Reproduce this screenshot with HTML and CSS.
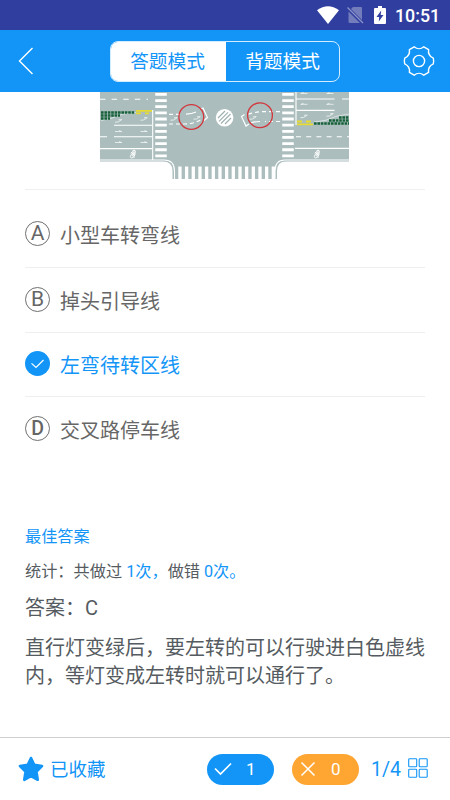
FILE: index.html
```html
<!DOCTYPE html>
<html lang="zh-CN">
<head>
<meta charset="utf-8">
<title>答题模式</title>
<link rel="stylesheet" href="styles.css">
</head>
<body>
<div class="status">
  <svg class="wifi" width="22" height="18" viewBox="0 0 22 18"><path d="M0 4.2Q11-3.6 22 4.2L11 18Z" fill="#fff"/></svg>
  <svg class="sim" width="17" height="18" viewBox="0 0 17 18"><path d="M6 1H14Q15 1 15 2V14L4 3ZM1.5 5.5L13 17H3Q1.5 17 1.5 15.5Z" fill="#747dbc"/><path d="M.5 1.5L16 17" stroke="#8c93c9" stroke-width="1.3"/></svg>
  <svg class="battery" width="12" height="18" viewBox="0 0 12 18"><path d="M4 0H8V2H11Q12 2 12 3V17Q12 18 11 18H1Q0 18 0 17V3Q0 2 1 2H4Z" fill="#fff"/><path d="M7.2 4.5L2.5 11H5.2L4.8 15.5L9.5 9H6.7Z" fill="#303f9f"/></svg>
  <span class="clock">10:51</span>
</div>
<header class="header">
  <svg class="back" width="16" height="28" viewBox="0 0 16 28"><path d="M14.5 1L1.5 14L14.5 27" fill="none" stroke="#fff" stroke-width="1.4"/></svg>
  <div class="tabs"><span class="tab active">答题模式</span><span class="tab">背题模式</span></div>
  <svg class="gear" width="32" height="32" viewBox="0 0 32 32" fill="none" stroke="#fff" stroke-width="1.4" stroke-linejoin="round"><path d="M11.2 1.8C14 4.2 18 4.2 20.8 1.8L25.6 4.6C25 8.6 26.6 11.5 30.3 13.2Q31 16 30.3 18.8C26.6 20.5 25 23.4 25.6 27.4L20.8 30.2C18 27.8 14 27.8 11.2 30.2L6.4 27.4C7 23.4 5.4 20.5 1.7 18.8Q1 16 1.7 13.2C5.4 11.5 7 8.6 6.4 4.6Z"/><circle cx="16" cy="16" r="5.6"/></svg>
</header>
<main class="content">
  <svg class="road" width="249" height="87" viewBox="100 92 249 87">
    <defs>
      <g id="arrow" fill="none" stroke="#f2f6f6" stroke-width=".8"><path d="M-3.5 0H3M.5-1L3.5 .3"/></g>
      <g id="turn" fill="none" stroke="#f2f6f6" stroke-width=".8"><path d="M-3.5 1.2L-.5 1L3-1.2M0-1.2L3.5-1.4"/></g>
      <g id="bike" fill="none" stroke="#fff" stroke-width=".9"><circle cx="-1.2" cy="2.5" r="1.5"/><circle cx="1" cy="-2.3" r="1.5"/><path d="M-2-2L2 2M1-4V4M-2.5 0H3"/></g>
    </defs>
    <path d="M100 92H349V161.5H286Q277 161.5 277 171V179H172.5V171Q172.5 161.5 163 161.5H100Z" fill="#abbdbd"/>
    <g stroke="#fff" fill="none" stroke-width="1.1">
      <path d="M100 99.3H148" stroke-dasharray="5.5 6.1"/>
      <path d="M114 125.2H152M100 136.8H107M114 136.8H152M100 148.6H152"/>
      <path d="M100 160H164Q174.5 160 174.5 171V179M152.7 110V160"/>
      <path d="M296 92V125M296 99H334.5M342 99H349M296 110.4H334.5M295 148.4H349"/>
      <path d="M296 136.7H349" stroke-dasharray="5 5.2"/>
      <path d="M349 160H285Q275 160 275 171V179"/>
    </g>
    <g fill="none" stroke="#edf1f0" stroke-width=".7"><path d="M101 120.5Q112 119 123 114L136 112.5"/><path d="M349 114Q337 115 325 120.5L314 122"/></g>
    <g fill="none" stroke="#17613a" stroke-width="2.5" stroke-dasharray="2.6 .8">
      <path d="M101 112.4H135M101 115.4H120M101 118.4H110"/>
      <path d="M314 123.4H349M329 120.4H349M339 117.4H349"/>
    </g>
    <path d="M136 110.9H152M136 113.3H141M145 113.3H149M297 124.3H313M297 121.5H302M306 121.5H311" stroke="#e6db32" stroke-width="1.8"/>
    <path d="M161 93V158.3M288 93V158.3" stroke="#fff" stroke-width="11.5" stroke-dasharray="2.8 3.35"/>
    <path d="M178.3 172.8H275" stroke="#fff" stroke-width="12.4" stroke-dasharray="3.3 3.37"/>
    <g fill="none" stroke="#fff" stroke-width="1.2">
      <path d="M169 114.4H181M169 124H185Q194 124 202 119" stroke-dasharray="4 3"/>
      <path d="M186 114.2Q192 114 196 112M201 109L203 108L207.5 117.5L204 120.5"/>
      <path d="M280 111.6H263Q254 112 246 115" stroke-dasharray="4 3"/>
      <path d="M280 121.5H265" stroke-dasharray="4 3"/>
      <path d="M244.5 114.5L241.5 116.5L246 126L249 124M251 123Q254 121.5 260 121.5"/>
    </g>
    <circle cx="224.6" cy="117.7" r="8.8" fill="#fff"/>
    <path d="M218 118L225 111M219 121.3L228 112.3M221 123.5L230.5 114M225 124L231 118" stroke="#a0b1b1" stroke-width="1.2"/>
    <g fill="none" stroke="#d2353b" stroke-width="1.3"><circle cx="191.3" cy="117" r="12.4"/><circle cx="260" cy="115.3" r="12.4"/></g>
    <use href="#turn" x="118.5" y="121"/><use href="#turn" x="144" y="119"/>
    <use href="#arrow" x="118.5" y="131.5"/><use href="#arrow" x="144" y="131.5"/>
    <use href="#arrow" x="118.5" y="142.5"/><use href="#arrow" x="144" y="142.5"/>
    <use href="#turn" x="174" y="119"/><use href="#turn" x="197" y="118"/><use href="#turn" x="253" y="118"/>
    <g transform="translate(608 0) scale(-1 1)">
      <use href="#arrow" x="304" y="93.5"/><use href="#arrow" x="278" y="93.5"/>
      <use href="#arrow" x="304" y="104.3"/><use href="#arrow" x="278" y="104.3"/>
    </g>
    <use href="#turn" x="304" y="116.5"/><use href="#turn" x="330" y="115"/>
    <use href="#bike" x="133" y="154"/><use href="#bike" x="317" y="154"/>
  </svg>
  <div class="options">
    <div class="option first"><span class="letter">A</span><span>小型车转弯线</span></div>
    <div class="option"><span class="letter">B</span><span>掉头引导线</span></div>
    <div class="option chosen"><svg class="check" width="25" height="25" viewBox="0 0 25 25"><circle cx="12.5" cy="12.5" r="12.5" fill="#1295f7"/><path d="M6.5 12.4L11 16.5L18.5 9" fill="none" stroke="#fff" stroke-width="1.2"/></svg><span>左弯待转区线</span></div>
    <div class="option"><span class="letter bold">D</span><span>交叉路停车线</span></div>
  </div>
  <section class="answer">
    <h2 class="best">最佳答案</h2>
    <p class="stats">统计：共做过 <span class="blue">1次，</span>做错 <span class="blue">0次。</span></p>
    <p class="key">答案：C</p>
    <p class="explain">直行灯变绿后，要左转的可以行驶进白色虚线内，等灯变成左转时就可以通行了。</p>
  </section>
</main>
<footer class="footer">
  <svg class="star" width="26" height="26" viewBox="0 0 26 26"><path d="M13 2L16.2 8.7L24 10L18.5 15.7L19.7 23.8L13 20.2L6.3 23.8L7.5 15.7L2 10L9.8 8.7Z" fill="#1295f7" stroke="#1295f7" stroke-width="2.6" stroke-linejoin="round"/></svg>
  <span class="saved">已收藏</span>
  <span class="pill right"><svg width="18" height="16" viewBox="0 0 18 16"><path d="M1 7.5L6.5 13L17 2.5" fill="none" stroke="#fff" stroke-width="1.7"/></svg><b>1</b></span>
  <span class="pill wrong"><svg width="16" height="16" viewBox="0 0 16 16"><path d="M1.5 1.5L14.5 14.5M14.5 1.5L1.5 14.5" stroke="#fff" stroke-width="1.5"/></svg><b>0</b></span>
  <span class="page">1/4</span>
  <svg class="grid" width="20" height="20" viewBox="0 0 20 20" fill="none" stroke="#1295f7" stroke-width="1.1"><rect x=".7" y=".7" width="8" height="8" rx=".8"/><rect x="11.2" y=".7" width="8" height="8" rx=".8"/><rect x=".7" y="11.2" width="8" height="8" rx=".8"/><rect x="11.2" y="11.2" width="8" height="8" rx=".8"/></svg>
</footer>
</body>
</html>
```
FILE: styles.css
```css
* { box-sizing: border-box; }
body {
  margin: 0;
  width: 450px;
  height: 800px;
  display: flex;
  flex-direction: column;
  overflow: hidden;
  background: #fff;
  color: #555b60;
  font-family: Roboto, "Noto Sans CJK SC", sans-serif;
}
svg { display: block; flex: none; }
h2, p { margin: 0; font-weight: 400; }

.status {
  height: 30px;
  flex: none;
  display: flex;
  align-items: center;
  justify-content: flex-end;
  padding-right: 11px;
  background: #303f9f;
  color: #fff;
}
.sim { margin-left: 8px; }
.battery { margin-left: 10px; }
.clock { width: 44px; margin-left: 9px; padding-top: 1px; font-size: 17.8px; font-weight: 500; line-height: 30px; white-space: nowrap; }

.header {
  height: 62px;
  flex: none;
  display: flex;
  align-items: center;
  padding: 0 15px 0 18px;
  background: #1295f7;
}
.tabs {
  display: flex;
  width: 230px;
  height: 41px;
  margin: 0 auto 0 76px;
  border: 1px solid #d4ecff;
  border-radius: 8px;
  overflow: hidden;
}
.tab { flex: 1; text-align: center; color: #fff; font-size: 18.7px; line-height: 41px; }
.tab.active { padding-right: 2px; background: #fff; color: #1295f7; }

.content { flex: 1; padding: 0 25px; }
.road { margin: 0 0 10px 75px; }
.options { color: #666; font-size: 20px; }
.option {
  display: flex;
  align-items: center;
  gap: 10px;
  height: 65px;
  border-top: 1px solid #efefef;
}
.option.first { height: 78px; padding-top: 12px; }
.option.chosen { height: 64px; color: #1295f7; }
.check { margin-top: -2px; }
.letter {
  width: 25px;
  height: 25px;
  margin-top: -2px;
  border: 1px solid #707070;
  border-radius: 50%;
  text-align: center;
  font-size: 21px;
  line-height: 23px;
}
.letter.bold { font-size: 19.5px; font-weight: 500; }

.best { margin-top: 64px; color: #1295f7; font-size: 16.2px; line-height: 24px; }
.stats { margin-top: 11px; font-size: 16.2px; line-height: 24px; }
.blue { color: #1295f7; }
.key { margin-top: 9px; font-size: 20px; line-height: 30px; }
.explain { width: 402px; margin-top: 12px; font-size: 20px; line-height: 27.5px; }

.footer {
  height: 63px;
  flex: none;
  display: flex;
  align-items: center;
  padding-left: 18px;
  border-top: 1px solid #cfcfcf;
  color: #1295f7;
}
.saved { width: 57px; margin: -2px 0 0 6px; font-size: 18.5px; }
.pill {
  display: flex;
  align-items: center;
  width: 67px;
  height: 31px;
  border-radius: 16px;
  color: #fff;
}
.pill b { font-size: 17px; font-weight: 400; }
.right { margin-left: 100px; padding-left: 7px; background: #1295f7; }
.right b { margin-left: 14px; }
.wrong { margin-left: 18px; padding-left: 8px; background: #ffa531; }
.wrong b { margin-left: 15px; }
.page { width: 29px; margin-left: 12px; font-size: 19.5px; white-space: nowrap; }
.grid { margin: -2px 0 0 8px; }
```
